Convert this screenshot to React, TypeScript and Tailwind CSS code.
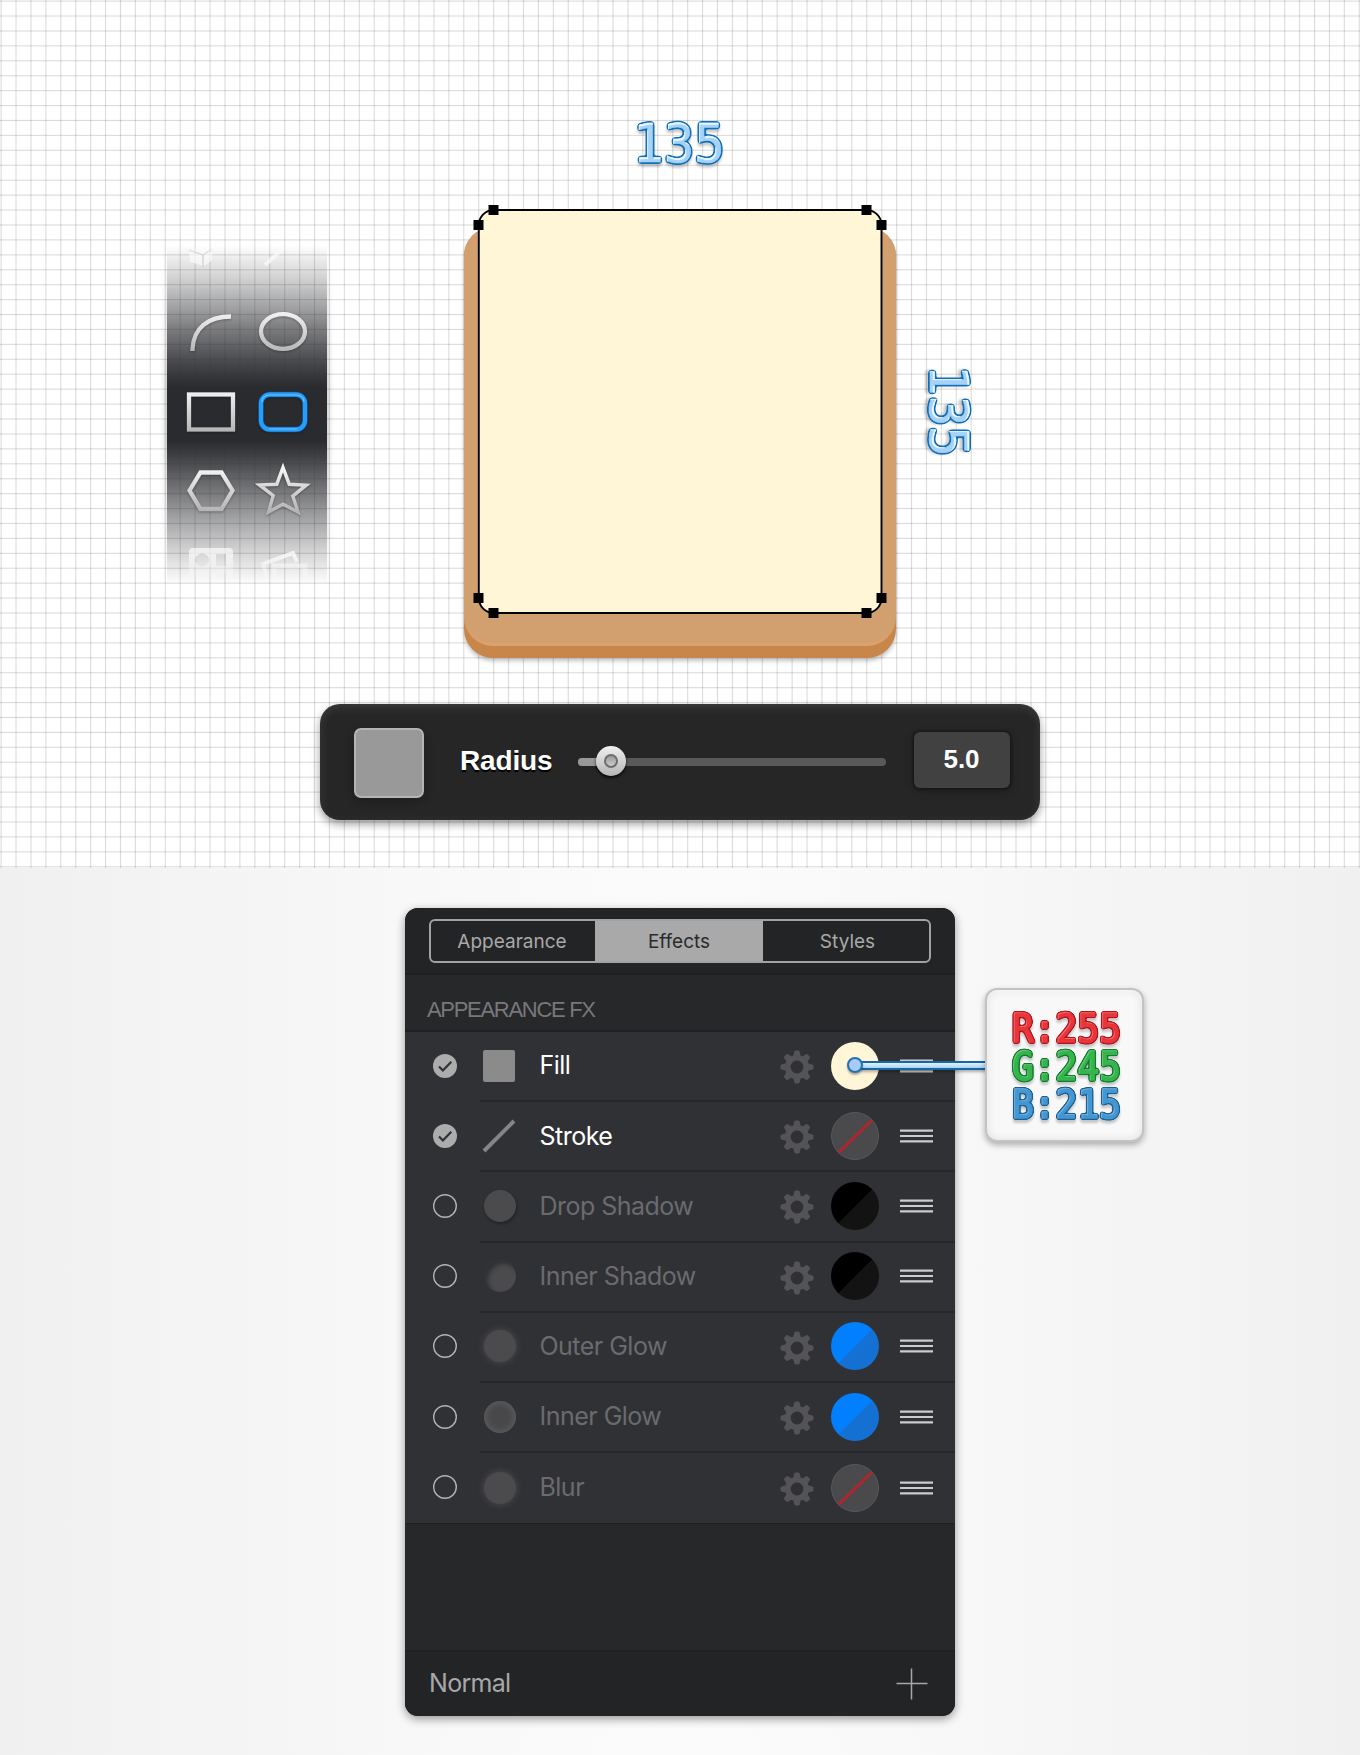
import React from "react";

const light = "url(#metal)";

function GlyphText({
  text,
  x,
  y,
  length,
  size,
  fill,
  filter,
  fillWidth,
}: {
  text: string;
  x: number;
  y: number;
  length: number;
  size: number;
  fill: string;
  filter: string;
  fillWidth: number;
}) {
  return (
    <text
      x={x}
      y={y}
      textLength={length}
      lengthAdjust="spacingAndGlyphs"
      fontSize={size}
      fontFamily={'"DejaVu Sans Mono", monospace'}
      strokeLinejoin="round"
      fill={fill}
      stroke={fill}
      strokeWidth={fillWidth}
      filter={filter}
    >
      {text}
    </text>
  );
}

function OutlineFilter({
  id,
  edge,
  spread,
  dx,
  dy,
  rim,
  rimOpacity,
}: {
  id: string;
  edge: string;
  spread: number;
  dx: number;
  dy: number;
  rim: string;
  rimOpacity: number;
}) {
  return (
    <filter id={id} x="-10%" y="-20%" width="120%" height="150%" colorInterpolationFilters="sRGB">
      <feGaussianBlur in="SourceAlpha" stdDeviation={spread} result="soft" />
      <feComponentTransfer in="soft" result="grown">
        <feFuncA type="linear" slope="8" intercept="-0.6" />
      </feComponentTransfer>
      <feFlood floodColor={edge} />
      <feComposite in2="grown" operator="in" result="edge" />
      <feDropShadow in="edge" dx="0" dy="3" stdDeviation="1" floodColor="#000" floodOpacity="0.2" result="base" />
      <feOffset in="SourceAlpha" dx={dx} dy={dy} result="shift" />
      <feComposite in="SourceAlpha" in2="shift" operator="out" result="rimShape" />
      <feFlood floodColor={rim} floodOpacity={rimOpacity} />
      <feComposite in2="rimShape" operator="in" result="hi" />
      <feMerge>
        <feMergeNode in="base" />
        <feMergeNode in="SourceGraphic" />
        <feMergeNode in="hi" />
      </feMerge>
    </filter>
  );
}

function Defs() {
  return (
    <svg width="0" height="0" className="absolute" aria-hidden="true">
      <defs>
        <linearGradient id="metal" x1="0" y1="18" x2="0" y2="60" gradientUnits="userSpaceOnUse">
          <stop offset="0" stopColor="#f4f4f4" />
          <stop offset="1" stopColor="#b4b4b4" />
        </linearGradient>
        <OutlineFilter id="inkSky" edge="#0f70b7" spread={1.7} dx={1.2} dy={1.5} rim="#f4fbff" rimOpacity={0.9} />
        <OutlineFilter id="inkRed" edge="#b3141c" spread={1.2} dx={0.6} dy={1.1} rim="#ffffff" rimOpacity={0.26} />
        <OutlineFilter id="inkGreen" edge="#0f7a34" spread={1.2} dx={0.6} dy={1.1} rim="#ffffff" rimOpacity={0.26} />
        <OutlineFilter id="inkBlue" edge="#1b5f95" spread={1.2} dx={0.6} dy={1.1} rim="#ffffff" rimOpacity={0.26} />
      </defs>
    </svg>
  );
}

function Dimension() {
  return (
    <svg width="100" height="60" viewBox="0 0 100 60" className="block overflow-visible">
      <GlyphText text="135" x={3} y={45.5} length={92} size={52.5} fill="#a6d2f8" filter="url(#inkSky)" fillWidth={0.6} />
    </svg>
  );
}

function Tool({ children }: { children: React.ReactNode }) {
  return (
    <svg
      width="72"
      height="79"
      viewBox="0 0 72 79"
      fill="none"
      stroke={light}
      strokeWidth="4.300"
      className="block drop-shadow-[0_1px_1px_rgba(0,0,0,0.3)]"
    >
      {children}
    </svg>
  );
}

function GhostTool({ children }: { children: React.ReactNode }) {
  return (
    <svg width="72" height="79" viewBox="0 0 72 79" fill="none" stroke="#fff" strokeWidth="4" className="block">
      {children}
    </svg>
  );
}

function Palette() {
  return (
    <div className="relative h-[345px] w-40 overflow-visible">
      <div className="absolute inset-y-0 -inset-x-3 px-3 [mask-image:linear-gradient(to_bottom,transparent_0,rgba(0,0,0,.26)_40px,rgba(0,0,0,.62)_84px,rgba(0,0,0,.88)_120px,black_142px,black_196px,rgba(0,0,0,.92)_208px,rgba(0,0,0,.73)_234px,rgba(0,0,0,.48)_268px,rgba(0,0,0,.22)_304px,transparent_340px)]">
        <div className="h-full w-full bg-[#2a2b2f] shadow-[0_0_7px_rgba(0,0,0,0.35)]" />
      </div>
      <div className="relative h-full overflow-hidden px-2 [mask-image:linear-gradient(to_bottom,transparent_0,black_10px,black_310px,transparent_338px)]">
        <div className="-mt-[31px] grid w-36 grid-cols-2">
          <GhostTool>
            <path d="M14 36l12-6 11 4v12l-8 6-14-4z" fill="#fff" fillOpacity=".6" stroke="none" />
            <path d="M14 36l14 5 9-6M28 41v12" stroke="#ccc" strokeOpacity=".8" strokeWidth="1.500" />
          </GhostTool>
          <GhostTool>
            <path d="M18 51L42 29" strokeOpacity=".6" />
          </GhostTool>
          <Tool>
            <path d="M17.500 58V56C18.500 35 33 23.500 56 23.500" />
          </Tool>
          <Tool>
            <ellipse cx="36" cy="38.500" rx="22" ry="17.300" />
          </Tool>
          <Tool>
            <rect x="14" y="22.500" width="44" height="35" />
          </Tool>
          <Tool>
            <rect x="14" y="22.500" width="44" height="35" rx="9" stroke="#0b6fd8" strokeWidth="6" strokeOpacity=".35" />
            <rect x="14" y="22.500" width="44" height="35" rx="9" stroke="#249dfb" />
            <path d="M15 30c0-4 3-7 8-7h26c5 0 8 3 8 7M22 57h28" stroke="#6cc0ff" strokeWidth="1.200" />
          </Tool>
          <Tool>
            <path d="M14.500 39.500L25.500 21.500h21l11 18L46.500 58H25.500z" />
          </Tool>
          <Tool>
            <path
              d="M36 16.500l6.200 16.700 17 1-13.400 11L51 61 36 53.300 21.500 61l4.700-16.300L12.500 34l17.300-.8z"
              strokeWidth="3.500"
            />
          </Tool>
          <GhostTool>
            <path
              fillRule="evenodd"
              d="M18 18h36q4 0 4 4v34H14V22q0-4 4-4zM27 23.500a7 6.500 0 1 0 .1 0zM41 24h10v12H41zM27 44l-7 8h14zM41 44h10v8H41z"
              fill="#fff"
              fillOpacity=".65"
              stroke="none"
            />
          </GhostTool>
          <GhostTool>
            <path d="M21 52L16 34l30-11 4 9" strokeOpacity=".75" />
            <path d="M27 58V36h31v22" strokeOpacity=".65" strokeWidth="5" />
          </GhostTool>
        </div>
      </div>
    </div>
  );
}

const handles = [
  [29.5, 5],
  [402.5, 5],
  [14.5, 20],
  [417.5, 20],
  [14.5, 393],
  [417.5, 393],
  [29.5, 408],
  [402.5, 408],
];

function Board() {
  return (
    <div className="relative h-[453px] w-[432px]">
      <div className="absolute inset-x-0 bottom-0 top-[22px] rounded-[29px] bg-[#c8864a] shadow-[0_3px_4px_rgba(0,0,0,0.24)]">
        <div className="h-[419px] rounded-[29px] border-b-[3px] border-[#dca26d] bg-[#d2a06e]" />
      </div>
      <svg width="432" height="453" viewBox="0 0 432 453" className="absolute inset-0 overflow-visible">
        <rect x="14.800" y="5" width="402.700" height="403" rx="15" fill="#fff5d7" stroke="#000" strokeWidth="1.900" />
        {handles.map(([x, y]) => (
          <rect key={`${x}-${y}`} x={x - 5} y={y - 5} width="10" height="10" />
        ))}
      </svg>
    </div>
  );
}

function RadiusBar() {
  return (
    <div className="mx-auto mt-[46px] flex h-[116px] w-[720px] items-center rounded-[20px] bg-[#262626] pl-[34px] pr-[30px] shadow-[0_4px_9px_rgba(0,0,0,0.4),inset_0_3px_10px_rgba(255,255,255,0.10)]">
      <div className="mt-[2px] h-[70px] w-[70px] rounded-[7px] border-2 border-[#b4b4b4] bg-[#999] shadow-[0_3px_10px_rgba(0,0,0,0.25)]" />
      <span className="-mt-[2px] ml-[36px] w-[118px] font-['Liberation_Sans',sans-serif] text-[28px] font-bold leading-8 tracking-[-0.150px] text-white [text-shadow:0_2px_1px_#000]">
        Radius
      </span>
      <div className="relative -mt-px h-2 w-[308px] rounded-full bg-[#595959]">
        <div className="h-2 w-8 rounded-full bg-[#999]" />
        <div className="absolute -top-[12px] left-[18px] flex h-[30px] w-[30px] items-center justify-center rounded-full bg-linear-to-b from-[#f0f0f0] to-[#b5b5b5] shadow-[0_2px_3px_rgba(0,0,0,0.8)]">
          <div className="h-[14px] w-[14px] rounded-full border-2 border-[#6d6d6d] bg-linear-to-b from-[#999] to-[#ccc]" />
        </div>
      </div>
      <div className="-mt-[4px] ml-auto flex h-14 w-24 items-center justify-center rounded-md bg-[#414141] pb-0.5 pr-px font-['Liberation_Sans',sans-serif] text-[26px] font-bold text-white shadow-[0_0_3px_1px_rgba(0,0,0,0.45),0_3px_8px_rgba(0,0,0,0.25)]">
        5.0
      </div>
    </div>
  );
}

type Kind = "fill" | "stroke" | "drop" | "innerShadow" | "outer" | "innerGlow" | "blur";
type Swatch = "cream" | "none" | "black" | "blue";

const effects: { name: string; kind: Kind; on: boolean; swatch: Swatch }[] = [
  { name: "Fill", kind: "fill", on: true, swatch: "cream" },
  { name: "Stroke", kind: "stroke", on: true, swatch: "none" },
  { name: "Drop Shadow", kind: "drop", on: false, swatch: "black" },
  { name: "Inner Shadow", kind: "innerShadow", on: false, swatch: "black" },
  { name: "Outer Glow", kind: "outer", on: false, swatch: "blue" },
  { name: "Inner Glow", kind: "innerGlow", on: false, swatch: "blue" },
  { name: "Blur", kind: "blur", on: false, swatch: "none" },
];

const kindClass: Record<Kind, string> = {
  fill: "ml-[3px] mr-px rounded-[2px] bg-[#8b8b8b]",
  stroke: "",
  drop: "ml-1 rounded-full bg-[#4b4b4d] shadow-[1px_2px_3px_rgba(0,0,0,0.3)]",
  innerShadow: "ml-1 rounded-full bg-[#4b4b4d] shadow-[inset_4px_4px_4px_#303135]",
  outer: "ml-1 rounded-full bg-[#4b4b4d] shadow-[0_0_6px_1px_#48484a]",
  innerGlow: "ml-1 rounded-full bg-[#48484a] shadow-[inset_0_0_6px_2px_#5c5c5e]",
  blur: "ml-1 rounded-full bg-[#4b4b4d] shadow-[0_0_6px_1px_#48484a]",
};

const swatchClass: Record<Swatch, string> = {
  cream: "bg-[#fff5d7]",
  none: "border border-[#58585a] bg-[#4a4a4c]",
  black: "bg-[linear-gradient(135deg,#000_50%,#131313_50.500%)]",
  blue: "bg-[linear-gradient(135deg,#007fff_50%,#1471d3_50.500%)]",
};

function Check({ on }: { on: boolean }) {
  return (
    <svg width="24" height="24" viewBox="0 0 24 24" fill="none">
      {on ? (
        <>
          <circle cx="12" cy="12" r="12" fill="#acacad" />
          <path d="M6 12.500l3.900 4L18.300 7.800" stroke="#303135" strokeWidth="2.200" />
        </>
      ) : (
        <circle cx="12" cy="12" r="11.300" stroke="#b4b4b6" strokeWidth="1.400" />
      )}
    </svg>
  );
}

function Gear() {
  return (
    <svg width="34" height="34" viewBox="-17 -17 34 34" fill="#545456">
      {[0, 45, 90, 135, 180, 225, 270, 315].map((a) => (
        <path key={a} d="M-4-10L-2.600-15.500Q-2.300-16.500-1.300-16.500H1.300Q2.300-16.500 2.600-15.500L4-10z" transform={`rotate(${a})`} />
      ))}
      <circle r="9.200" fill="none" stroke="#545456" strokeWidth="5.600" />
    </svg>
  );
}

function EffectRow({ name, kind, on, swatch, last }: (typeof effects)[number] & { last: boolean }) {
  return (
    <li className="flex h-[70.200px] items-stretch pl-7">
      <div className="flex w-[47px] items-center pb-[3px]">
        <Check on={on} />
      </div>
      <div className={`relative flex flex-1 items-center pb-px ${last ? "" : "border-b-2 border-[#26272a]"}`}>
        {kind === "stroke" ? (
          <svg width="34" height="34" viewBox="0 0 34 34" className="ml-[2px] block">
            <path d="M2 32L32 2" stroke="#858587" strokeWidth="4" />
          </svg>
        ) : (
          <div className={`size-8 ${kindClass[kind]}`} />
        )}
        <span
          className={`ml-[23.500px] w-[220px] whitespace-nowrap pt-px font-['Inter',sans-serif] text-[25px] tracking-[-0.520px] ${
            on ? "text-white" : "text-[#6b6b6e]"
          }`}
        >
          {name}
        </span>
        <div className="ml-5 mt-[3px]">
          <Gear />
        </div>
        <div
          className={`relative ml-[17.500px] size-12 shrink-0 overflow-hidden rounded-full ${swatchClass[swatch]}`}
        >
          {swatch === "none" && (
            <svg width="46" height="46" viewBox="0 0 46 46" className="block">
              <path d="M5.500 40.500L40.500 6.500" stroke="#b3252a" strokeWidth="3" />
            </svg>
          )}
        </div>
        <svg width="33" height="16" viewBox="0 0 33 16" className="ml-[21px] block">
          <path d="M0 2.700h33M0 8h33M0 13.300h33" stroke="#cbcbcd" strokeWidth="2.200" />
        </svg>
        {kind === "fill" && <Callout />}
      </div>
    </li>
  );
}

function Callout() {
  const channels = [
    { text: "R:255", y: 1041.3, fill: "#e8363b", filter: "url(#inkRed)" },
    { text: "G:245", y: 1079, fill: "#35b54a", filter: "url(#inkGreen)" },
    { text: "B:215", y: 1117, fill: "#4397d3", filter: "url(#inkBlue)" },
  ];
  return (
    <div className="absolute left-[367px] top-[33px] flex h-0 items-center">
      <div className="z-10 size-4 rounded-full border-2 border-[#1d74b5] bg-[#a9c9f6] shadow-[0_2px_2px_rgba(0,0,0,0.3)]" />
      <div className="-ml-[3px] h-[9px] w-[127px] border-y-[2px] border-[#1b65a3] bg-linear-to-b from-[#dff4ff] to-[#a6d3f5] shadow-[0_2px_3px_rgba(0,0,0,0.3)]" />
      <div className="-ml-[2px] h-[154px] w-[159px] shrink-0 rounded-[12px] border-2 border-[#c3c3c3] bg-[#f8f8f8] shadow-[0_3px_6px_rgba(0,0,0,0.3),inset_0_0_10px_rgba(0,0,0,0.10),inset_0_2px_2px_#fff]">
        <svg width="155" height="150" viewBox="987.500 989.500 155 150" className="block">
          {channels.map((c) => (
            <GlyphText key={c.text} text={c.text} x={1012.5} y={c.y} length={109} size={38.5} fill={c.fill} filter={c.filter} fillWidth={1.7} />
          ))}
        </svg>
      </div>
    </div>
  );
}

function EffectsPanel() {
  return (
    <div className="flex h-[808px] w-[550px] flex-col rounded-[13px] bg-[#27282a] shadow-[0_3px_10px_rgba(0,0,0,0.4)]">
      <div className="flex h-[67px] shrink-0 rounded-t-[13px] border-b-2 border-[#1f2022] bg-[#232426] pl-6 pt-[11px]">
        <div className="flex h-11 w-[502px] overflow-hidden rounded-[6px] border-2 border-[#a2a2a2] font-['Inter',sans-serif] text-[19px] text-[#a9a9a9]">
          <div className="flex w-[164px] items-center justify-center pr-0.5 pt-0.5">Appearance</div>
          <div className="flex w-[168px] items-center justify-center bg-[#a9a9a9] pt-0.5 text-[#2a2b2d]">Effects</div>
          <div className="flex flex-1 items-center justify-center pl-[3px] pt-0.5">Styles</div>
        </div>
      </div>
      <h2 className="flex h-[57px] shrink-0 items-end border-b-2 border-[#1f2022] pb-[4px] pl-[22px] font-['Liberation_Sans',sans-serif] text-[22px] leading-[33px] tracking-[-1.300px] text-[#78787a]">
        APPEARANCE FX
      </h2>
      <ul className="bg-[#303135]">
        {effects.map((e, i) => (
          <EffectRow key={e.name} {...e} last={i === effects.length - 1} />
        ))}
      </ul>
      <div className="flex-1 border-t border-[#1e1f20]" />
      <div className="flex h-[66px] items-center justify-between rounded-b-[13px] border-t-2 border-[#202123] bg-[#232426] pl-6 pr-[27px]">
        <span className="font-['Inter',sans-serif] text-[25px] tracking-[-0.700px] text-[#a8a8aa]">Normal</span>
        <svg width="32" height="32" viewBox="0 0 32 32" className="block">
          <path d="M0.500 15.500h31M15.500 0.500v31" stroke="#a8a8aa" strokeWidth="1.500" />
        </svg>
      </div>
    </div>
  );
}

export default function App() {
  return (
    <main className="h-[1755px] w-[1360px] overflow-hidden bg-white">
      <Defs />
      <section className="h-[868px] bg-[repeating-linear-gradient(90deg,transparent_0,rgba(0,0,0,.14)_1.100px,transparent_2.200px,transparent_14.925px),repeating-linear-gradient(180deg,transparent_0,rgba(0,0,0,.14)_1.100px,transparent_2.200px,transparent_14.925px)] pt-[116px]">
        <div className="flex justify-center">
          <Dimension />
        </div>
        <div className="mt-[29px] flex items-start pl-[167px]">
          <div className="mt-10">
            <Palette />
          </div>
          <div className="ml-[137px]">
            <Board />
          </div>
          <div className="mt-[177px] rotate-90">
            <Dimension />
          </div>
        </div>
        <RadiusBar />
      </section>
      <section className="flex h-[887px] justify-center bg-[linear-gradient(90deg,#f0f0f0,#f8f8f8_30%,#fbfbfb_50%,#f8f8f8_70%,#f0f0f0)] pt-10">
        <EffectsPanel />
      </section>
    </main>
  );
}
